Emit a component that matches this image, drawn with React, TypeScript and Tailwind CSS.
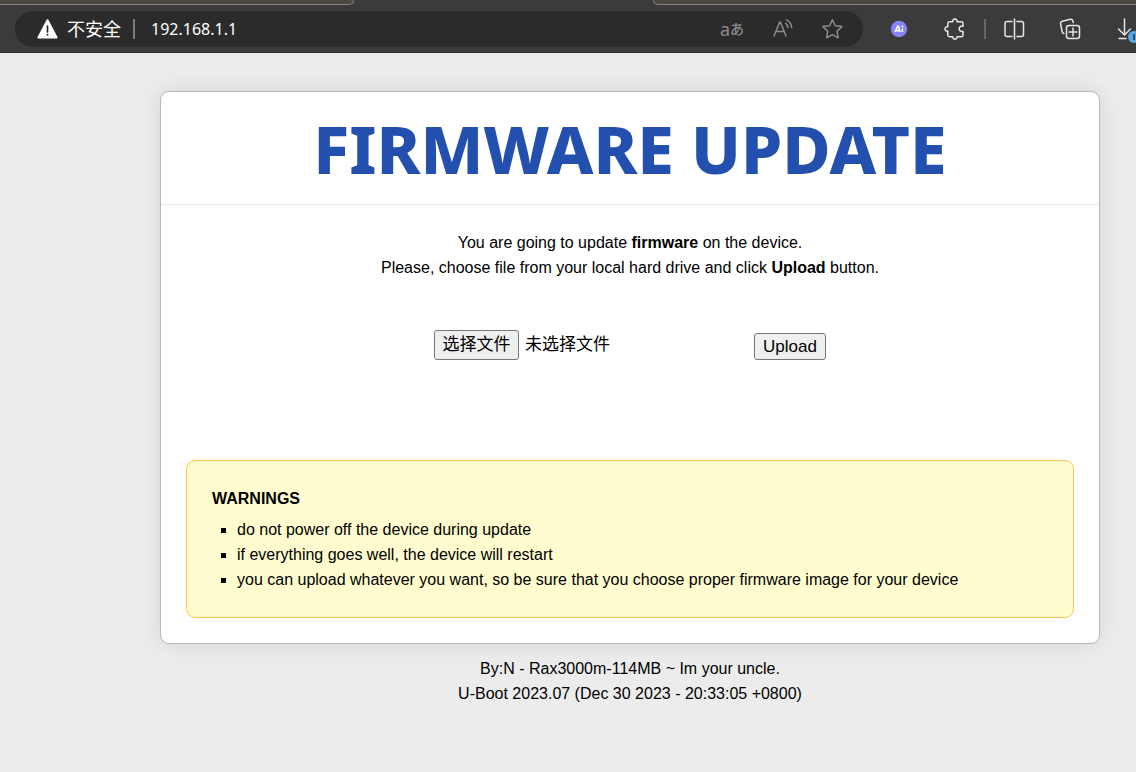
import type { ReactNode } from "react";

const warnings = [
  "do not power off the device during update",
  "if everything goes well, the device will restart",
  "you can upload whatever you want, so be sure that you choose proper firmware image for your device",
];

type IconButtonProps = {
  label: string;
  className?: string;
  children: ReactNode;
};

const IconButton = ({ label, className = "w-6", children }: IconButtonProps) => (
  <button
    type="button"
    aria-label={label}
    className={`relative flex h-6 shrink-0 items-center justify-center ${className}`}
  >
    {children}
  </button>
);

const Icon = ({ children }: { children: ReactNode }) => (
  <svg
    viewBox="0 0 24 24"
    fill="none"
    stroke="currentColor"
    strokeWidth="1.5"
    strokeLinecap="round"
    strokeLinejoin="round"
    className="size-6 shrink-0"
    aria-hidden="true"
  >
    {children}
  </svg>
);

const TabStrip = () => (
  <div className="flex h-[5px] bg-[#3b3b3b]">
    <div className="w-[354px] rounded-br-[6px] border-r border-b border-[#83807b] bg-[#4b4843]" />
    <div className="w-[299px]" />
    <div className="flex-1 rounded-bl-[6px] border-b border-l border-[#83807b] bg-[#4b4843]" />
  </div>
);

const AddressBar = () => (
  <div className="flex h-9 flex-1 items-center rounded-full bg-[#2b2b2b] pr-[19px] pl-5 text-[#8c8c8c]">
    <button type="button" className="flex items-center text-lg/6 text-white">
      <svg viewBox="0 0 24 24" className="mr-2 size-6" aria-hidden="true">
        <path
          d="M12.5 3.2 21.6 20.4H3.4Z"
          fill="#fff"
          stroke="#fff"
          strokeWidth="2"
          strokeLinejoin="round"
        />
        <path d="M12.5 9v6" stroke="#2b2b2b" strokeWidth="1.7" strokeLinecap="round" />
        <circle cx="12.5" cy="17.7" r="1" fill="#2b2b2b" />
      </svg>
      不安全
    </button>
    <span className="mr-4 ml-3 h-5 w-0.5 bg-[#7c7c7c]" />
    <input
      type="text"
      aria-label="Address"
      defaultValue="192.168.1.1"
      className="min-w-0 flex-1 bg-transparent text-base/6 text-white outline-none"
    />
    <div className="flex gap-[26px]">
      <IconButton label="Translate">
        <span className="text-lg/6">a</span>
        <span className="text-sm/6 font-medium">あ</span>
      </IconButton>
      <IconButton label="Read aloud">
        <Icon>
          <path d="M4 19 9.8 5h.6L16 19M6 14.5h8" />
          <path d="M15.5 6.2c1.300.9 2.100 2.300 2.400 4.400M16.500 2.900c3 1.300 4.700 4 5.200 7.700" />
        </Icon>
      </IconButton>
      <IconButton label="Favorites">
        <Icon>
          <path d="m12.4 2.8 2.8 6 6.7.8-4.9 4.6 1.2 6.6-5.8-3.2-5.8 3.2 1.200-6.600-4.900-4.600 6.700-.8Z" />
        </Icon>
      </IconButton>
    </div>
  </div>
);

const Toolbar = () => (
  <div className="flex h-12 items-center border-b border-[#303030] bg-[#3b3b3b] pl-[15px] text-[#e6e6e6]">
    <AddressBar />
    <div className="ml-6 flex shrink-0 items-center gap-[31px]">
      <IconButton label="AI">
        <svg viewBox="0 0 24 24" className="size-6" aria-hidden="true">
          <circle cx="12" cy="12" r="8.2" fill="#8583f7" />
          <path
            d="m8 15 2.5-5.6h.8L13 15M8.8 13.8h3.8M15.4 11.6V15"
            fill="none"
            stroke="#fff"
            strokeWidth="1.6"
          />
          <circle cx="15.4" cy="9.4" r="1" fill="#fff" />
        </svg>
      </IconButton>
      <IconButton label="Extensions">
        <Icon>
          <path d="M7.500 4.800h3.300c-.2-1.800.7-2.700 2.100-2.700s2.300.9 2.100 2.700h4.300c1 0 1.700.7 1.700 1.700v2.700c-2.500-.4-3.800.8-3.800 2.600s1.300 3 3.800 2.600v3.600c0 1-.7 1.700-1.700 1.700H15c.2 1.500-.7 2.400-2.100 2.400s-2.300-.9-2.100-2.400H7.500c-1 0-1.700-.7-1.700-1.700v-3.900c-1.800.2-2.800-.9-2.800-2.200s1-2.400 2.800-2.200V6.500c0-1 .7-1.700 1.700-1.700Z" />
        </Icon>
      </IconButton>
    </div>
    <span className="mr-4 ml-[18px] h-5 w-0.5 shrink-0 bg-[#666]" />
    <div className="flex shrink-0 gap-8">
      <IconButton label="Split screen">
        <Icon>
          <path d="M12.5 2v20M10 4.500H5C3.800 4.500 3 5.300 3 6.500v11c0 1.200.8 2 2 2h5M15 4.500h4.500c1.200 0 2 .8 2 2v11c0 1.200-.8 2-2 2H15" />
        </Icon>
      </IconButton>
      <IconButton label="Collections">
        <Icon>
          <rect x="8.500" y="8.500" width="13" height="13" rx="2.500" />
          <path d="M15 11v8M11 15h8M5.800 16.500c-1-.3-1.500-1-1.700-2L2.600 7c-.3-1.300.4-2.400 1.700-2.700l8-2c1.300-.3 2.300.4 2.600 1.700l.4 1.500" />
        </Icon>
      </IconButton>
      <IconButton label="Downloads" className="w-[22px]">
        <Icon>
          <path d="M11.5 2v15.500M5.500 12l6 6 6-6M6 21.500h7" />
        </Icon>
        <span className="absolute top-3.5 left-3.5 flex size-3 items-center justify-center rounded-full bg-[#5ba7e0]">
          <span className="h-1.5 w-0.5 bg-[#24527a]" />
        </span>
      </IconButton>
    </div>
  </div>
);

const UploadForm = () => (
  <form
    className="mt-[50px] flex items-end justify-center text-[17px]/6"
    onSubmit={(e) => e.preventDefault()}
  >
    <div className="flex w-80 items-center">
      <input id="firmware" type="file" className="sr-only" />
      <label
        htmlFor="firmware"
        className="flex h-[30px] w-[85px] items-center justify-center rounded-[3px] border border-[#767676] bg-[#efefef]"
      >
        选择文件
      </label>
      <span className="ml-1.5">未选择文件</span>
    </div>
    <button
      type="submit"
      className="flex h-[27px] w-[72px] items-center justify-center rounded-[3px] border border-[#767676] bg-[#efefef]"
    >
      Upload
    </button>
  </form>
);

const App = () => {
  return (
    <div className="min-h-screen overflow-x-hidden bg-[#ececec] text-base/[25px] text-black">
      <header className="font-['Noto_Sans','Noto_Sans_CJK_SC',sans-serif]">
        <TabStrip />
        <Toolbar />
      </header>

      <div className="pt-[38px] pr-9 pl-40 font-['Liberation_Sans','Noto_Sans_CJK_SC',sans-serif]">
        <main className="rounded-[9px] border border-[#b8b8b8] bg-white shadow-[0_0_20px_rgba(0,0,0,0.1)]">
          <h1 className="border-b border-[#e6e6e6] py-6 text-center font-['Noto_Sans',sans-serif] text-[66px]/[64px] font-extrabold text-[#2350ae]">
            FIRMWARE UPDATE
          </h1>

          <div className="p-[25px]">
            <p className="text-center">
              You are going to update <strong>firmware</strong> on the device.
              <br />
              Please, choose file from your local hard drive and click{" "}
              <strong>Upload</strong> button.
            </p>

            <UploadForm />

            <section className="mt-[100px] rounded-[9px] border border-[#ffc64b] bg-[#fffdcf] p-[25px]">
              <h2 className="font-bold">WARNINGS</h2>
              <ul className="mt-1.5 list-[square] pl-[25px]">
                {warnings.map((warning) => (
                  <li key={warning}>{warning}</li>
                ))}
              </ul>
            </section>
          </div>
        </main>

        <footer className="mt-3 text-center">
          <p>By:N - Rax3000m-114MB ~ Im your uncle.</p>
          <p>U-Boot 2023.07 (Dec 30 2023 - 20:33:05 +0800)</p>
        </footer>
      </div>
    </div>
  );
};

export default App;
